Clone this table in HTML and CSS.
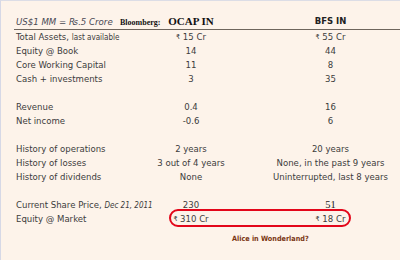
FILE: index.html
```html
<!DOCTYPE html>
<html>
<head>
<meta charset="utf-8">
<link rel="stylesheet" href="styles.css">
</head>
<body>
<div class="page">
  <div class="sheet">
    <div class="row head">
      <div class="label"><span class="conv">US$1 MM = <span class="rs">₨</span>.5 Crore</span><span class="bb">Bloomberg:</span></div>
      <div class="c1 ocap">OCAP IN</div>
      <div class="c2 bfs">BFS IN</div>
    </div>
    <div class="row"><div class="label">Total Assets, <span class="small">last available</span></div><div class="c1"><span class="rup">₹</span> 15 Cr</div><div class="c2"><span class="rup">₹</span> 55 Cr</div></div>
    <div class="row"><div class="label">Equity @ Book</div><div class="c1">14</div><div class="c2">44</div></div>
    <div class="row"><div class="label">Core Working Capital</div><div class="c1">11</div><div class="c2">8</div></div>
    <div class="row"><div class="label">Cash + investments</div><div class="c1">3</div><div class="c2">35</div></div>
    <div class="row blank"></div>
    <div class="row"><div class="label">Revenue</div><div class="c1">0.4</div><div class="c2">16</div></div>
    <div class="row"><div class="label">Net income</div><div class="c1">-0.6</div><div class="c2">6</div></div>
    <div class="row blank"></div>
    <div class="row"><div class="label">History of operations</div><div class="c1">2 years</div><div class="c2">20 years</div></div>
    <div class="row"><div class="label">History of losses</div><div class="c1">3 out of 4 years</div><div class="c2">None, in the past 9 years</div></div>
    <div class="row"><div class="label">History of dividends</div><div class="c1">None</div><div class="c2">Uninterrupted, last 8 years</div></div>
    <div class="row blank"></div>
    <div class="row"><div class="label">Current Share Price, <span class="date">Dec 21, 2011</span></div><div class="c1">230</div><div class="c2 serif">51</div></div>
    <div class="row market">
      <div class="label">Equity @ Market</div>
      <div class="c1"><span class="rup">₹</span> 310 Cr</div>
      <div class="c2"><span class="rup">₹</span> 18 Cr</div>
      <div class="ring"></div>
    </div>
    <div class="alice">Alice in Wonderland?</div>
  </div>
</div>
</body>
</html>
```
FILE: styles.css
```css
html, body {
  margin: 0;
  padding: 0;
}
body {
  width: 400px;
  height: 260px;
  overflow: hidden;
  background: #fdf3ea;
}
.page {
  box-sizing: border-box;
  width: 400px;
  height: 260px;
  border-top: 1px solid #dcdde6;
  border-left: 1px solid #d6d8e6;
  background: #fdf3ea;
  padding-top: 13px;
  padding-left: 13px;
}
.sheet {
  font-family: "DejaVu Sans Condensed", "DejaVu Sans", sans-serif;
  font-size: 9.5px;
  color: #3c3c3c;
}
.row {
  display: grid;
  grid-template-columns: 137px 80px 1fr;
  height: 14px;
  line-height: 14px;
  position: relative;
}
.label {
  padding-left: 2px;
  white-space: nowrap;
}
.c1 {
  text-align: center;
  white-space: nowrap;
}
.c2 {
  text-align: center;
  padding-left: 30px;
  white-space: nowrap;
}
.head {
  height: 15px;
  line-height: 15px;
  border-bottom: 1px solid #6e655c;
}
.conv {
  display: inline-block;
  width: 104px;
  font-family: "DejaVu Sans", sans-serif;
  font-style: italic;
  font-size: 8.6px;
  color: #4a4a55;
}
.bb {
  font-family: "Liberation Serif", serif;
  font-weight: bold;
  font-size: 8px;
  color: #111;
}
.ocap {
  font-family: "Liberation Serif", serif;
  font-weight: bold;
  font-size: 11px;
  color: #111;
}
.bfs {
  font-family: "DejaVu Sans", sans-serif;
  font-weight: bold;
  font-size: 8.5px;
  color: #222;
}
.small {
  font-size: 8px;
}
.date {
  font-style: italic;
  font-size: 8px;
}
.serif {
  font-family: "Liberation Serif", serif;
  font-size: 10.5px;
  color: #222;
}
.rup {
  font-size: 7px;
  vertical-align: 1px;
}
.ring {
  position: absolute;
  left: 155px;
  top: -3px;
  width: 178px;
  height: 14px;
  border: 2px solid #e3061a;
  border-radius: 9px;
}
.alice {
  margin-top: 8px;
  padding-left: 218px;
  font-family: "DejaVu Sans Condensed", "DejaVu Sans", sans-serif;
  font-weight: bold;
  font-size: 7.2px;
  color: #7a3512;
}
```
